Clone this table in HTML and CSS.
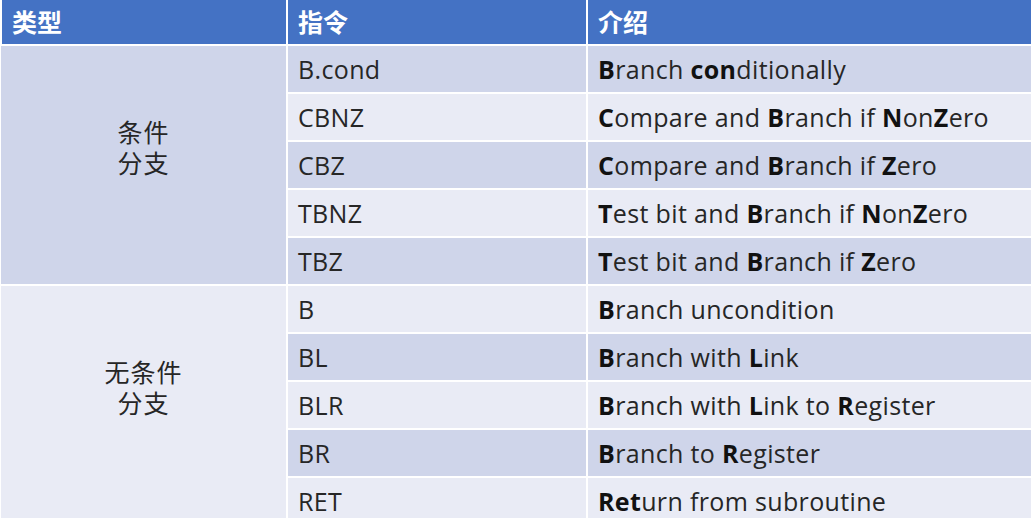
FILE: index.html
```html
<!DOCTYPE html>
<html lang="zh">
<head>
<meta charset="utf-8">
<link rel="stylesheet" href="styles.css">
</head>
<body>
<table class="grid">
  <colgroup><col class="c1"><col class="c2"><col class="c3"></colgroup>
  <thead>
    <tr><th>类型</th><th>指令</th><th>介绍</th></tr>
  </thead>
  <tbody>
    <tr class="odd"><td class="type odd" rowspan="5">条件<br>分支</td><td>B.cond</td><td><b>B</b>ranch <b>con</b>ditionally</td></tr>
    <tr class="even"><td>CBNZ</td><td><b>C</b>ompare and <b>B</b>ranch if <b>N</b>on<b>Z</b>ero</td></tr>
    <tr class="odd"><td>CBZ</td><td><b>C</b>ompare and <b>B</b>ranch if <b>Z</b>ero</td></tr>
    <tr class="even"><td>TBNZ</td><td><b>T</b>est bit and <b>B</b>ranch if <b>N</b>on<b>Z</b>ero</td></tr>
    <tr class="odd"><td>TBZ</td><td><b>T</b>est bit and <b>B</b>ranch if <b>Z</b>ero</td></tr>
    <tr class="even"><td class="type even" rowspan="5">无条件<br>分支</td><td>B</td><td><b>B</b>ranch uncondition</td></tr>
    <tr class="odd"><td>BL</td><td><b>B</b>ranch with <b>L</b>ink</td></tr>
    <tr class="even"><td>BLR</td><td><b>B</b>ranch with <b>L</b>ink to <b>R</b>egister</td></tr>
    <tr class="odd"><td>BR</td><td><b>B</b>ranch to <b>R</b>egister</td></tr>
    <tr class="even"><td>RET</td><td><b>Ret</b>urn from subroutine</td></tr>
  </tbody>
</table>
</body>
</html>
```
FILE: styles.css
```css
html, body {
  margin: 0;
  padding: 0;
  background: #ffffff;
}
body {
  width: 1031px;
  height: 518px;
  overflow: hidden;
  font-family: "Open Sans", "Noto Sans", "Noto Sans CJK SC", sans-serif;
  color: #262626;
}
.grid {
  width: 1031px;
  border-collapse: collapse;
  table-layout: fixed;
}
.c1 { width: 286px; }
.c2 { width: 300px; }
.c3 { width: 445px; }
.grid th, .grid td {
  border: 2px solid #ffffff;
  padding: 0 0 0 10px;
  text-align: left;
  vertical-align: middle;
  white-space: nowrap;
}
.grid th {
  background: #4472c4;
  color: #ffffff;
  font-family: "Noto Sans CJK SC", sans-serif;
  font-weight: 700;
  font-size: 25px;
  height: 41px;
  border-top: 0;
  padding-bottom: 3px;
}
.grid td {
  font-size: 25px;
  height: 46px;
  letter-spacing: 0.35px;
}
.grid td b { font-weight: 700; color: #111; }
.grid tr.odd td { background: #cfd5ea; }
.grid tr.even td { background: #e9ebf5; }
.grid td.type {
  text-align: center;
  padding: 0 0 36px 0;
  font-family: "Noto Sans CJK SC", sans-serif;
  font-size: 25px;
  line-height: 31px;
  letter-spacing: 1px;
}
.grid td.type.odd { background: #cfd5ea; }
.grid td.type.even { background: #e9ebf5; }
.grid td:first-child { border-left: 0; }
.grid td:last-child, .grid th:last-child { border-right: 0; }
```
